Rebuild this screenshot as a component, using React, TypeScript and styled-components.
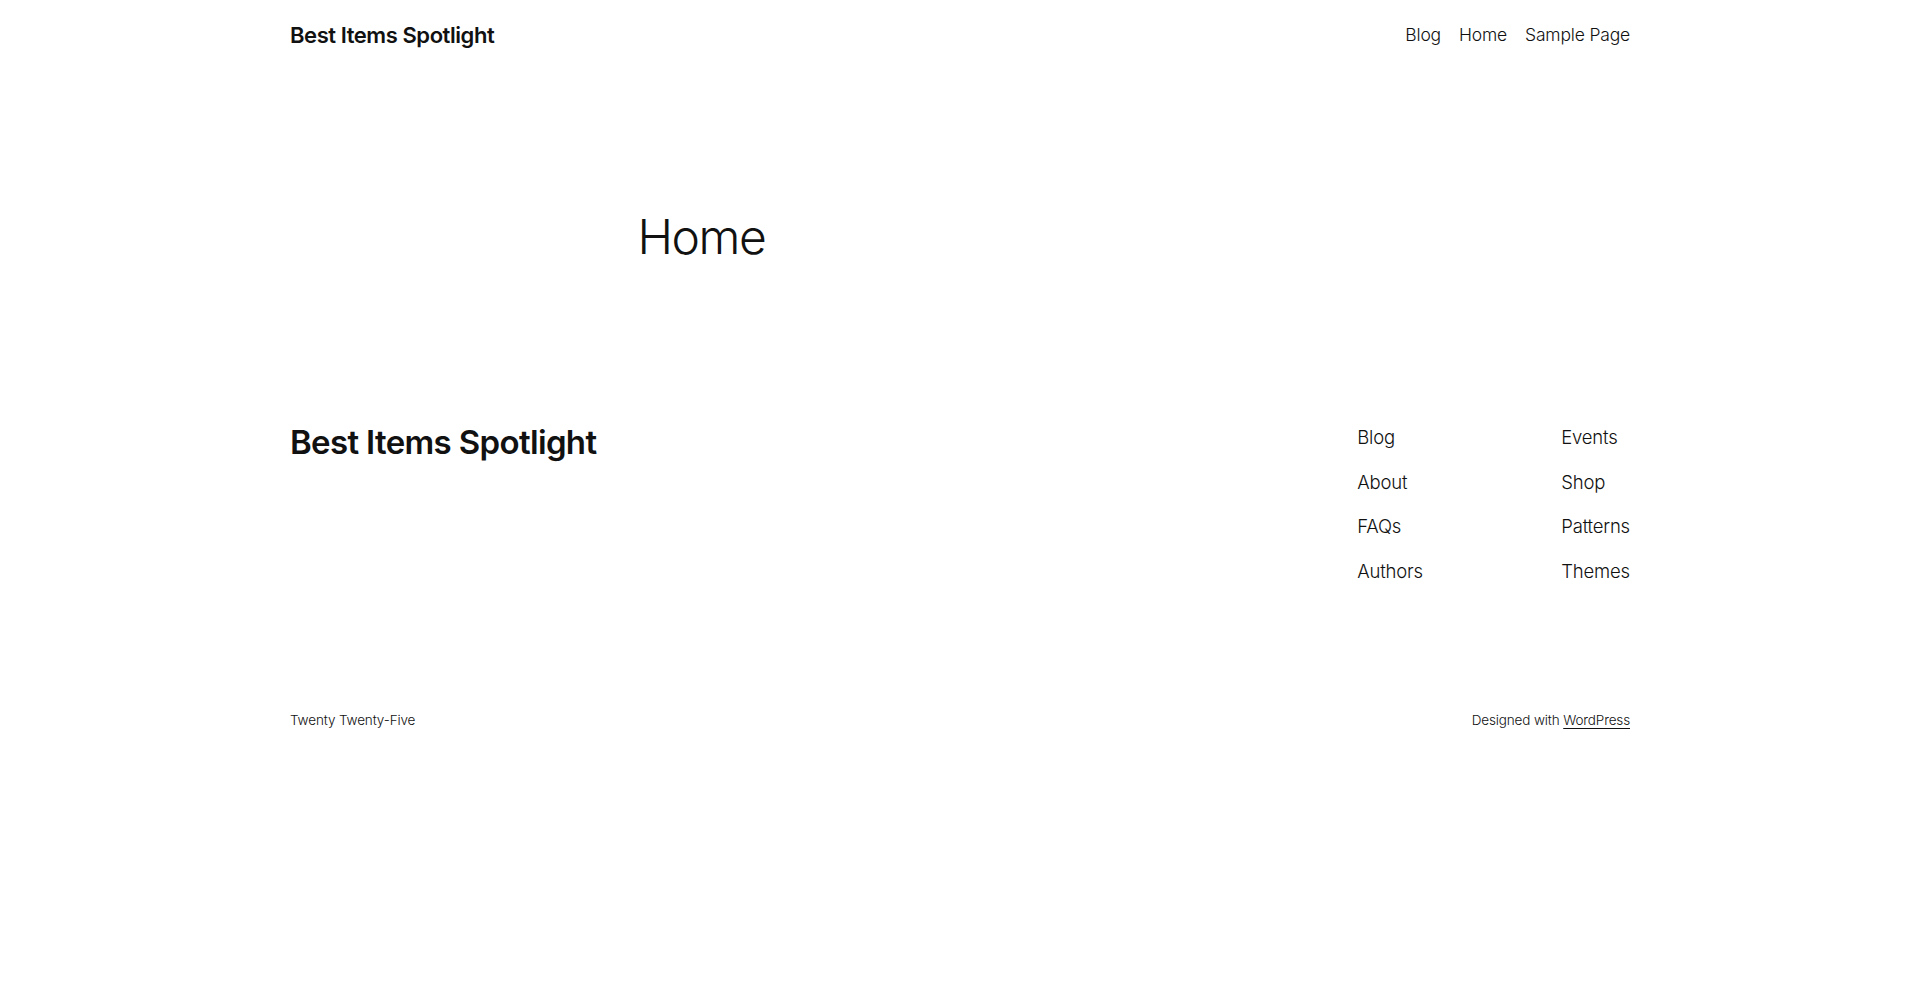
import React from 'react';
import styled, { createGlobalStyle } from 'styled-components';

const colors = {
  text: '#111111',
  background: '#ffffff',
};

const font = `Inter, "Noto Sans", "Liberation Sans", sans-serif`;

const GlobalStyle = createGlobalStyle`
  html, body {
    margin: 0;
    padding: 0;
    background: ${colors.background};
    color: ${colors.text};
    font-family: ${font};
    -webkit-font-smoothing: antialiased;
  }

  a {
    color: inherit;
    text-decoration: none;
  }
`;

const Wide = styled.div`
  max-width: 1340px;
  margin: 0 auto;
`;

const Header = styled(Wide)`
  display: flex;
  align-items: center;
  justify-content: space-between;
  padding: 20px 0;
`;

const SiteTitle = styled.a<{ $size: number; $lineHeight?: number }>`
  font-size: ${(p) => p.$size}px;
  font-weight: 600;
  letter-spacing: -0.02em;
  line-height: ${(p) => p.$lineHeight ?? 1.4};
`;

const HeaderNav = styled.nav`
  display: flex;
  gap: 18px;
`;

const NavLink = styled.a<{ $size?: number }>`
  font-size: ${(p) => p.$size ?? 17.5}px;
  font-weight: 300;
  letter-spacing: -0.01em;
  line-height: 1.5;
`;

const Main = styled.main`
  padding: 139px 0 160px;
`;

const Content = styled.div`
  max-width: 645px;
  margin: 0 auto;
`;

const PageTitle = styled.h1`
  margin: 0;
  font-size: 48px;
  font-weight: 300;
  letter-spacing: -0.03em;
  line-height: 1.125;
`;

const Footer = styled(Wide)`
  padding-bottom: 200px;
`;

const FooterTop = styled.div`
  display: flex;
  justify-content: space-between;
  align-items: flex-start;
`;

const FooterNav = styled.nav`
  display: flex;
`;

const FooterColumn = styled.div<{ $width?: number }>`
  display: flex;
  flex-direction: column;
  gap: 17px;
  width: ${(p) => (p.$width ? `${p.$width}px` : 'auto')};
`;

const FooterBottom = styled.div`
  display: flex;
  justify-content: space-between;
  align-items: baseline;
  margin-top: 125px;
  font-size: 13.5px;
  font-weight: 300;
  letter-spacing: -0.01em;
  line-height: 1.4;
`;

const Underlined = styled.a`
  text-decoration: underline;
  text-underline-offset: 3px;
  text-decoration-thickness: 1px;
`;

const leftLinks = ['Blog', 'About', 'FAQs', 'Authors'];
const rightLinks = ['Events', 'Shop', 'Patterns', 'Themes'];

export default function App() {
  return (
    <>
      <GlobalStyle />
      <Header as="header">
        <SiteTitle href="#" $size={22}>Best Items Spotlight</SiteTitle>
        <HeaderNav>
          <NavLink href="#">Blog</NavLink>
          <NavLink href="#">Home</NavLink>
          <NavLink href="#">Sample Page</NavLink>
        </HeaderNav>
      </Header>

      <Main>
        <Content>
          <PageTitle>Home</PageTitle>
        </Content>
      </Main>

      <Footer as="footer">
        <FooterTop>
          <SiteTitle href="#" $size={33} $lineHeight={1.1}>Best Items Spotlight</SiteTitle>
          <FooterNav>
            <FooterColumn $width={204}>
              {leftLinks.map((l) => (
                <NavLink key={l} href="#" $size={18.5}>{l}</NavLink>
              ))}
            </FooterColumn>
            <FooterColumn>
              {rightLinks.map((l) => (
                <NavLink key={l} href="#" $size={18.5}>{l}</NavLink>
              ))}
            </FooterColumn>
          </FooterNav>
        </FooterTop>
        <FooterBottom>
          <span>Twenty Twenty-Five</span>
          <span>
            Designed with <Underlined href="#">WordPress</Underlined>
          </span>
        </FooterBottom>
      </Footer>
    </>
  );
}
